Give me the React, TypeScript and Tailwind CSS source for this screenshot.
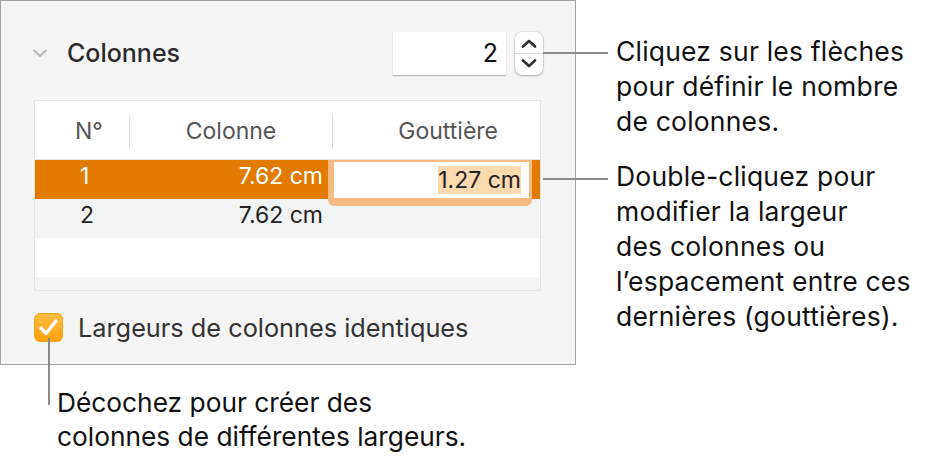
const ChevronDown = ({ color, width }: { color: string; width: number }) => (
  <svg width="16" height="9" viewBox="0 0 16 9" fill="none">
    <path
      d="M2 1.5 L8 7 L14 1.5"
      stroke={color}
      strokeWidth={width}
      strokeLinecap="round"
      strokeLinejoin="round"
    />
  </svg>
);

const ChevronUp = () => (
  <svg width="16" height="9" viewBox="0 0 16 9" fill="none">
    <path
      d="M2 7.5 L8 2 L14 7.5"
      stroke="#2e2e2e"
      strokeWidth="2.6"
      strokeLinecap="round"
      strokeLinejoin="round"
    />
  </svg>
);

const Stepper = () => (
  <div className="flex h-[43px] w-[28px] flex-col rounded-[7px] bg-white shadow-[0_0_0_1px_rgba(0,0,0,0.07),0_1px_2px_rgba(0,0,0,0.25)]">
    <div className="flex flex-1 items-center justify-center border-b border-[#dadada] pt-[2px]">
      <ChevronUp />
    </div>
    <div className="flex flex-1 items-center justify-center pb-[2px]">
      <ChevronDown color="#2e2e2e" width={2.6} />
    </div>
  </div>
);

const Checkbox = () => (
  <div className="flex h-[29px] w-[29px] items-center justify-center rounded-[6px] border border-[#f3a21c] bg-gradient-to-b from-[#ffbd3f] to-[#ffa200]">
    <svg width="21" height="19" viewBox="0 0 21 19" fill="none">
      <path
        d="M3 10 L8 15.5 L18 3"
        stroke="white"
        strokeWidth="3.4"
        strokeLinecap="round"
        strokeLinejoin="round"
      />
    </svg>
  </div>
);

const ColumnsTable = () => (
  <div className="ml-[33px] mt-[25px] w-[507px] border border-[#e3e3e3] bg-white">
    <div className="flex h-[59px] items-center border-b border-[#e6e6e6] pt-[3px] text-[23px] text-[#555]">
      <div className="w-[94px] pl-[40px]">N°</div>
      <div className="h-[33px] w-px bg-[#dddddd]" />
      <div className="w-[202px] text-center">Colonne</div>
      <div className="h-[33px] w-px bg-[#dddddd]" />
      <div className="w-[207px] pr-[42px] text-right">Gouttière</div>
    </div>
    <div className="relative text-[23px]">
      <div className="flex h-[39px] items-center bg-[#e07b00] pb-[6px] text-white">
        <div className="w-[94px] pl-[45px]">1</div>
        <div className="w-[203px] pr-[9px] text-right">7.62 cm</div>
      </div>
      <div className="flex h-[39px] items-center bg-[#f2f4f4] pb-[6px] text-[#222]">
        <div className="w-[94px] pl-[45px]">2</div>
        <div className="w-[203px] pr-[9px] text-right">7.62 cm</div>
      </div>
      <div className="h-[39px] bg-white" />
      <div className="h-[13px] bg-[#f2f4f4]" />
      {/* field being edited */}
      <div className="absolute left-[293px] top-0 h-[46px] w-[204px] rounded-b-[6px] border-x-[6px] border-t-[2px] border-b-[8px] border-[#f5bb82] border-r-[3px]">
        <div className="flex h-full items-center justify-end bg-white pr-[8px]">
          <span className="h-[28px] bg-[#fdd9ae] leading-[28px] text-[#222]">
            1.27 cm
          </span>
        </div>
      </div>
    </div>
  </div>
);

const Panel = () => (
  <div className="flex h-[365px] w-[576px] shrink-0 flex-col border border-[#a2a2a2] bg-[#f5f5f5]">
    <div className="mt-[31px] flex h-[43px] items-center pl-[31px] pr-[32px]">
      <div className="w-[17px]">
        <ChevronDown color="#b9b9b9" width={2} />
      </div>
      <p className="ml-[18px] text-[25px] font-medium text-[#2b2b2b]">
        Colonnes
      </p>
      <div className="ml-auto h-[43px] w-[113px] bg-white pr-[8px] text-right text-[25px] leading-[43px] text-[#111] shadow-[0_1px_1px_rgba(0,0,0,0.25)]">
        2
      </div>
      <div className="ml-[9px]">
        <Stepper />
      </div>
    </div>
    <ColumnsTable />
    <div className="ml-[33px] mt-[18px] flex items-center gap-[15px]">
      <Checkbox />
      <span className="text-[25.3px] text-[#333]">
        Largeurs de colonnes identiques
      </span>
    </div>
  </div>
);

const App = () => {
  return (
    <div className="relative h-[467px] w-[929px] overflow-hidden bg-white font-['Inter',sans-serif]">
      <div className="flex">
        <Panel />
        <div className="ml-[40px] whitespace-nowrap pt-[34px] text-[26.5px] leading-[35px] tracking-[0.2px] text-[#111]">
          <p>
            Cliquez sur les flèches
            <br />
            pour définir le nombre
            <br />
            de colonnes.
          </p>
          <p className="mt-[20px]">
            Double-cliquez pour
            <br />
            modifier la largeur
            <br />
            des colonnes ou
            <br />
            l’espacement entre ces
            <br />
            dernières (gouttières).
          </p>
        </div>
      </div>
      <p className="ml-[57px] mt-[21px] whitespace-nowrap text-[26.3px] leading-[34px] text-[#111]">
        Décochez pour créer des
        <br />
        colonnes de différentes largeurs.
      </p>

      {/* callout leader lines */}
      <div className="absolute left-[543px] top-[52px] h-[2px] w-[65px] bg-[#8a8a8a]" />
      <div className="absolute left-[543px] top-[178px] h-[2px] w-[65px] bg-[#8a8a8a]" />
      <div className="absolute left-[48px] top-[338px] h-[67px] w-[2px] bg-[#8a8a8a]" />
    </div>
  );
};

export default App;
